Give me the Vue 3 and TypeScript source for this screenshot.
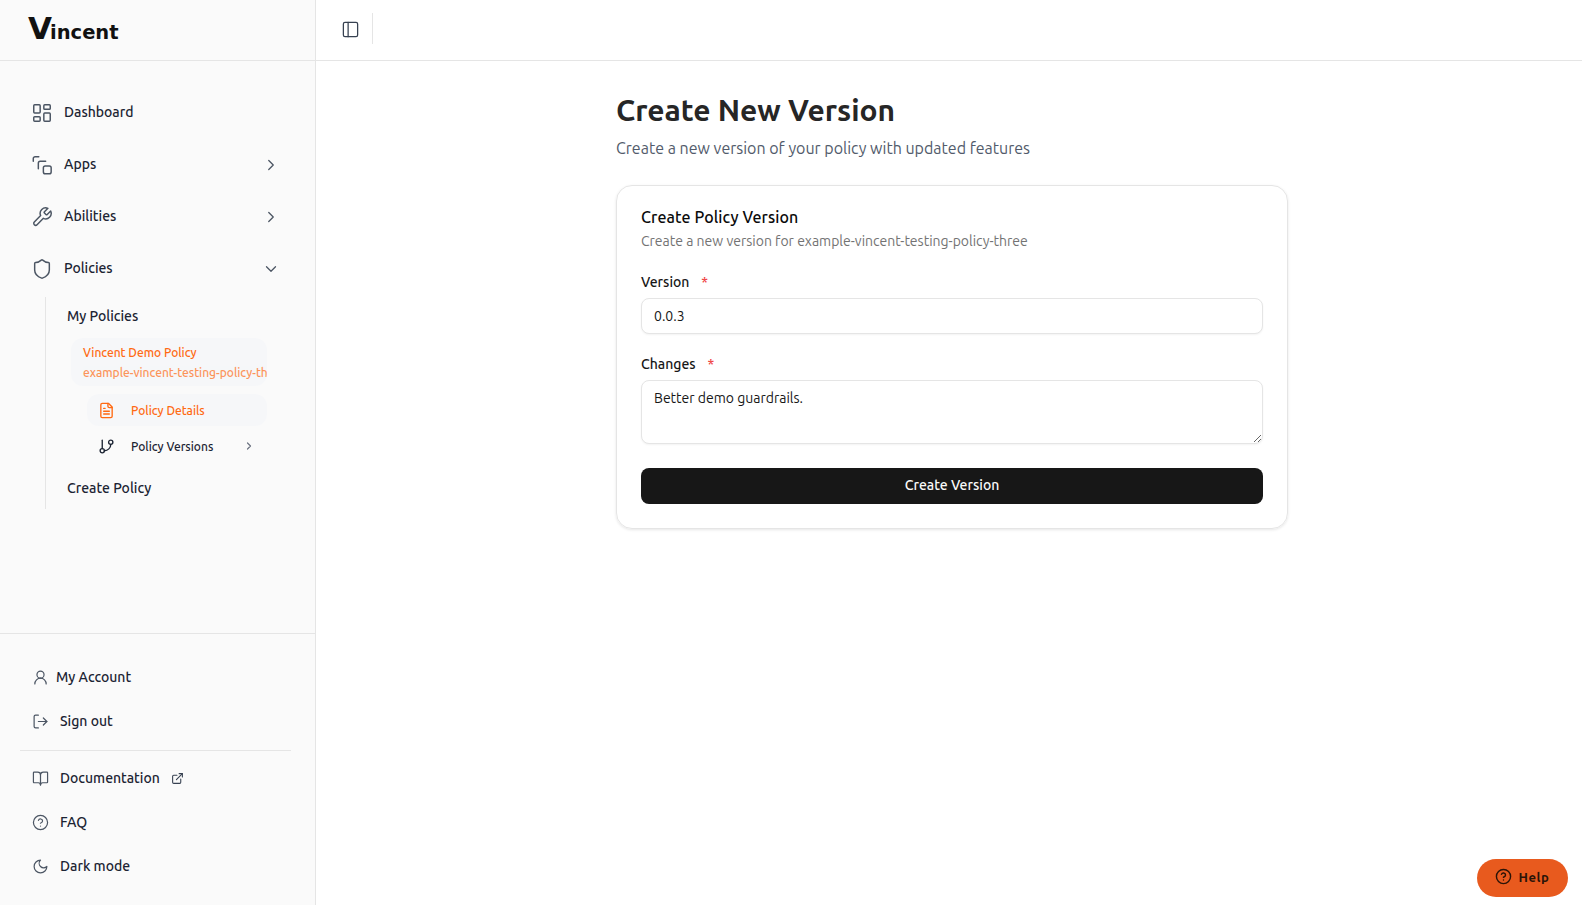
<script setup lang="ts">
interface NavItem { label: string; icon: string; chevron?: 'right' | 'down' }
const mainNav: NavItem[] = [
  { label: 'Dashboard', icon: 'dashboard' },
  { label: 'Apps', icon: 'apps', chevron: 'right' },
  { label: 'Abilities', icon: 'wrench', chevron: 'right' },
  { label: 'Policies', icon: 'shield', chevron: 'down' },
]
</script>

<template>
  <div class="app">
    <aside class="sidebar">
      <div class="brand">
        <span class="logo"><span class="logo-v">V</span><span class="logo-rest">incent</span></span>
      </div>
      <nav class="nav">
        <a v-for="item in mainNav" :key="item.label" class="nav-item">
          <svg class="ic18" viewBox="0 0 24 24">
            <template v-if="item.icon === 'dashboard'">
              <rect x="3" y="3" width="7" height="9" rx="1" /><rect x="14" y="3" width="7" height="5" rx="1" /><rect x="14" y="12" width="7" height="9" rx="1" /><rect x="3" y="16" width="7" height="5" rx="1" />
            </template>
            <template v-else-if="item.icon === 'apps'">
              <path d="M2.5 8V5a2 2 0 0 1 2-2h4" /><path d="M8 16v-6a2 2 0 0 1 2-2h6" /><rect x="13.5" y="13" width="8.5" height="8.5" rx="2" />
            </template>
            <template v-else-if="item.icon === 'wrench'">
              <path d="M14.7 6.3a1 1 0 0 0 0 1.4l1.6 1.6a1 1 0 0 0 1.4 0l3.77-3.77a6 6 0 0 1-7.94 7.94l-6.91 6.91a2.12 2.12 0 0 1-3-3l6.91-6.91a6 6 0 0 1 7.94-7.94l-3.76 3.76z" />
            </template>
            <template v-else>
              <path d="M20 13c0 5-3.5 7.5-7.66 8.95a1 1 0 0 1-.67-.01C7.5 20.5 4 18 4 13V6a1 1 0 0 1 1-1c2 0 4.5-1.2 6.24-2.72a1.17 1.17 0 0 1 1.52 0C14.51 3.81 17 5 19 5a1 1 0 0 1 1 1z" />
            </template>
          </svg>
          <span class="nav-label">{{ item.label }}</span>
          <svg v-if="item.chevron === 'right'" class="chev" viewBox="0 0 24 24"><path d="m9 18 6-6-6-6" /></svg>
          <svg v-if="item.chevron === 'down'" class="chev" viewBox="0 0 24 24"><path d="m6 9 6 6 6-6" /></svg>
        </a>
      </nav>
      <div class="subnav">
        <a class="sub-link">My Policies</a>
        <div class="policy-card">
          <div class="policy-name">Vincent Demo Policy</div>
          <div class="policy-pkg">example-vincent-testing-policy-three</div>
        </div>
        <a class="leaf leaf-active">
          <svg class="ic16" viewBox="0 0 24 24"><path d="M15 2H6a2 2 0 0 0-2 2v16a2 2 0 0 0 2 2h12a2 2 0 0 0 2-2V7Z" /><path d="M14 2v4a2 2 0 0 0 2 2h4" /><path d="M10 9H8" /><path d="M16 13H8" /><path d="M16 17H8" /></svg>
          <span>Policy Details</span>
        </a>
        <a class="leaf">
          <svg class="ic16" viewBox="0 0 24 24"><path d="M6 3v12" /><circle cx="18" cy="6" r="3" /><circle cx="6" cy="18" r="3" /><path d="M18 9a9 9 0 0 1-9 9" /></svg>
          <span>Policy Versions</span>
          <svg class="chev-sm" viewBox="0 0 24 24"><path d="m9 18 6-6-6-6" /></svg>
        </a>
        <a class="sub-link create">Create Policy</a>
      </div>
      <div class="footer">
        <a class="foot-item account">
          <svg class="ic16" viewBox="0 0 24 24"><circle cx="12" cy="8" r="5" /><path d="M20 21a8 8 0 0 0-16 0" /></svg>
          <span>My Account</span>
        </a>
        <a class="foot-item">
          <svg class="ic16" viewBox="0 0 24 24"><path d="M9 21H5a2 2 0 0 1-2-2V5a2 2 0 0 1 2-2h4" /><path d="m16 17 5-5-5-5" /><path d="M21 12H9" /></svg>
          <span>Sign out</span>
        </a>
        <div class="foot-divider"></div>
        <a class="foot-item">
          <svg class="ic16" viewBox="0 0 24 24"><path d="M12 7v14" /><path d="M3 18a1 1 0 0 1-1-1V4a1 1 0 0 1 1-1h5a4 4 0 0 1 4 4 4 4 0 0 1 4-4h5a1 1 0 0 1 1 1v13a1 1 0 0 1-1 1h-6a3 3 0 0 0-3 3 3 3 0 0 0-3-3z" /></svg>
          <span>Documentation</span>
          <svg class="ext" viewBox="0 0 24 24"><path d="M15 3h6v6" /><path d="M10 14 21 3" /><path d="M18 13v6a2 2 0 0 1-2 2H5a2 2 0 0 1-2-2V8a2 2 0 0 1 2-2h6" /></svg>
        </a>
        <a class="foot-item">
          <svg class="ic16" viewBox="0 0 24 24"><circle cx="12" cy="12" r="10" /><path d="M9.09 9a3 3 0 0 1 5.83 1c0 2-3 3-3 3" /><path d="M12 17h.01" /></svg>
          <span>FAQ</span>
        </a>
        <a class="foot-item">
          <svg class="ic16" viewBox="0 0 24 24"><path d="M12 3a6 6 0 0 0 9 9 9 9 0 1 1-9-9Z" /></svg>
          <span>Dark mode</span>
        </a>
      </div>
    </aside>

    <div class="content">
      <header class="topbar">
        <button class="toggle" type="button" aria-label="Toggle sidebar">
          <svg viewBox="0 0 24 24"><rect x="3" y="3" width="18" height="18" rx="2" /><path d="M9 3v18" /></svg>
        </button>
        <span class="topbar-sep"></span>
      </header>
      <main class="main">
        <div class="column">
          <h1 class="title">Create New Version</h1>
          <p class="lead">Create a new version of your policy with updated features</p>
          <form class="card" @submit.prevent>
            <h2 class="card-title">Create Policy Version</h2>
            <p class="card-sub">Create a new version for example-vincent-testing-policy-three</p>
            <label class="field-label first">Version<span class="req">*</span></label>
            <input class="input" value="0.0.3" />
            <label class="field-label">Changes<span class="req">*</span></label>
            <textarea class="textarea">Better demo guardrails.</textarea>
            <button class="submit" type="submit">Create Version</button>
          </form>
        </div>
      </main>
    </div>

    <button class="help" type="button">
      <svg class="help-ic" viewBox="0 0 24 24"><circle cx="12" cy="12" r="10" /><path d="M9.09 9a3 3 0 0 1 5.83 1c0 2-3 3-3 3" /><path d="M12 17h.01" /></svg>
      <span>Help</span>
    </button>
  </div>
</template>

<style>
html, body { margin: 0; background: #fff; }
</style>

<style scoped>
.app {
  display: flex;
  height: 905px;
  overflow: hidden;
  position: relative;
  font-family: Ubuntu, "Noto Sans", "Open Sans", sans-serif;
  color: #171717;
}
svg { fill: none; stroke: currentColor; stroke-width: 2; stroke-linecap: round; stroke-linejoin: round; flex: none; display: block; }
a { display: flex; align-items: center; }

.sidebar {
  width: 315px;
  flex: none;
  background: #fafafa;
  border-right: 1px solid #e5e5e5;
  display: flex;
  flex-direction: column;
  box-sizing: content-box;
}
.brand {
  height: 60px;
  border-bottom: 1px solid #e5e5e5;
  padding-left: 28px;
  display: flex;
  align-items: center;
  flex: none;
}
.logo { display: block; color: #111; font-weight: 700; font-family: "DejaVu Sans", sans-serif; line-height: 1; margin-top: -3px; white-space: nowrap; }
.logo-v { font-size: 31px; letter-spacing: -2px; }
.logo-rest { font-size: 19.5px; }

.nav { padding: 25px 20px 0; display: flex; flex-direction: column; }
.nav-item {
  height: 52px;
  padding: 0 16px 0 11px;
  color: #1c2433;
  font-size: 14px;
  font-weight: 500;
  gap: 11px;
}
.ic18 { width: 22px; height: 22px; color: #4b5563; stroke-width: 1.6; margin-top: 1px; }
.nav-label { flex: 1; }
.chev { width: 18px; height: 18px; color: #4b5563; margin: 2px -1px 0 0; stroke-width: 1.7; }

.subnav {
  margin-left: 45px;
  width: 222px;
  border-left: 1px solid #e5e5e5;
  display: flex;
  flex-direction: column;
  height: 212px;
  flex: none;
  margin-top: 3px;
}
.sub-link { height: 38px; padding-left: 21px; font-size: 14px; font-weight: 500; color: #1c2433; flex: none; }
.policy-card {
  margin: 3px 0 8px 25px;
  width: 184px;
  padding: 5px 0 5px 12px;
  border-radius: 12px;
  background: #f6f7f9;
  overflow: hidden;
  box-sizing: content-box;
  height: 38px;
  flex: none;
  color: #ff6a13;
  font-size: 12px;
  font-weight: 500;
  line-height: 20px;
  white-space: nowrap;
}
.policy-pkg { opacity: .7; }
.leaf {
  margin-left: 41px;
  height: 32px;
  flex: none;
  width: 180px;
  padding-left: 11px;
  box-sizing: border-box;
  font-size: 12px;
  font-weight: 500;
  color: #1c2433;
  border-radius: 12px;
}
.leaf + .leaf { margin-top: 4px; }
.leaf .ic16 { margin-right: 16px; width: 17px; height: 17px; stroke-width: 1.9; }
.leaf-active { background: #f6f7f9; color: #ff6a13; }
.chev-sm { width: 12px; height: 12px; margin-left: auto; margin-right: 12px; color: #6b7280; stroke-width: 2.4; }
.create { margin-top: 6px; height: 40px; }

.footer {
  margin-top: auto;
  border-top: 1px solid #e5e5e5;
  padding: 21px 20px 17px 32px;
  display: flex;
  flex-direction: column;
  flex: none;
}
.foot-item { height: 44px; font-size: 14px; font-weight: 500; color: #1c2433; }
.foot-item .ic16 { width: 17px; height: 17px; margin-right: 11px; color: #4b5563; stroke-width: 1.7; }
.account .ic16 { margin-right: 7px; }
.foot-divider { height: 1px; background: #e5e5e5; margin: 7px 4px 5px -12px; }
.ext { width: 13px; height: 13px; margin-left: 11px; color: #374151; }

.content { flex: 1; min-width: 0; display: flex; flex-direction: column; }
.topbar {
  height: 60px;
  flex: none;
  border-bottom: 1px solid #e5e5e5;
  display: flex;
  align-items: center;
  padding-left: 25px;
  box-sizing: content-box;
}
.toggle { width: 19px; height: 19px; padding: 0; border: 0; background: none; color: #374151; margin-top: -2px; }
.toggle svg { width: 19px; height: 19px; stroke-width: 1.6; }
.topbar-sep { width: 1px; height: 31px; background: #e5e5e5; margin-left: 12px; margin-top: -3px; }

.main { flex: 1; padding: 30px 0 0 300px; }
.column { width: 672px; }
.title { margin: 0; font-size: 30px; line-height: 38px; font-weight: 700; color: #262626; }
.lead { margin: 7px 0 0; font-size: 16px; line-height: 24px; color: #525b6b; }
.card {
  margin-top: 25px;
  border: 1px solid #e5e5e5;
  border-radius: 16px;
  box-shadow: 0 1px 3px rgba(0,0,0,.1);
  padding: 19px 24px 24px;
  height: 344px;
  box-sizing: border-box;
  display: flex;
  flex-direction: column;
}
.card-title { margin: 0; font-size: 16px; line-height: 24px; font-weight: 500; color: #0a0a0a; letter-spacing: .1px; }
.card-sub { margin: 0; font-size: 14px; line-height: 24px; color: #737373; }
.field-label { margin-top: 20px; font-size: 14px; line-height: 20px; font-weight: 500; color: #171717; margin-bottom: 6px; }
.first { margin-top: 19px; }
.req { color: #ef4444; margin-left: 12px; }
.input, .textarea {
  font: inherit;
  font-size: 14px;
  color: #171717;
  border: 1px solid #e5e5e5;
  border-radius: 8px;
  padding: 0 12px;
  background: #fff;
  box-shadow: 0 1px 2px rgba(0,0,0,.05);
  outline: none;
  box-sizing: border-box;
  width: 100%;
  display: block;
}
.input { height: 36px; }
.textarea { height: 64px; padding: 7px 12px; line-height: 20px; resize: vertical; }
.submit {
  margin-top: 24px;
  height: 36px;
  flex: none;
  border: 0;
  border-radius: 8px;
  background: #171717;
  color: #fafafa;
  font: inherit;
  font-size: 14px;
  font-weight: 500;
  padding: 0 0 2px;
}
.help {
  position: absolute;
  right: 14px;
  bottom: 8px;
  width: 91px;
  height: 38px;
  border: 0;
  border-radius: 19px;
  background: #e85a1e;
  color: #2b1408;
  font: inherit;
  font-size: 13px;
  font-weight: 700;
  letter-spacing: .6px;
  display: flex;
  align-items: center;
  justify-content: center;
  gap: 6px;
  padding: 0 0 3px;
}
.help-ic { width: 17px; height: 17px; stroke-width: 2; }
</style>
